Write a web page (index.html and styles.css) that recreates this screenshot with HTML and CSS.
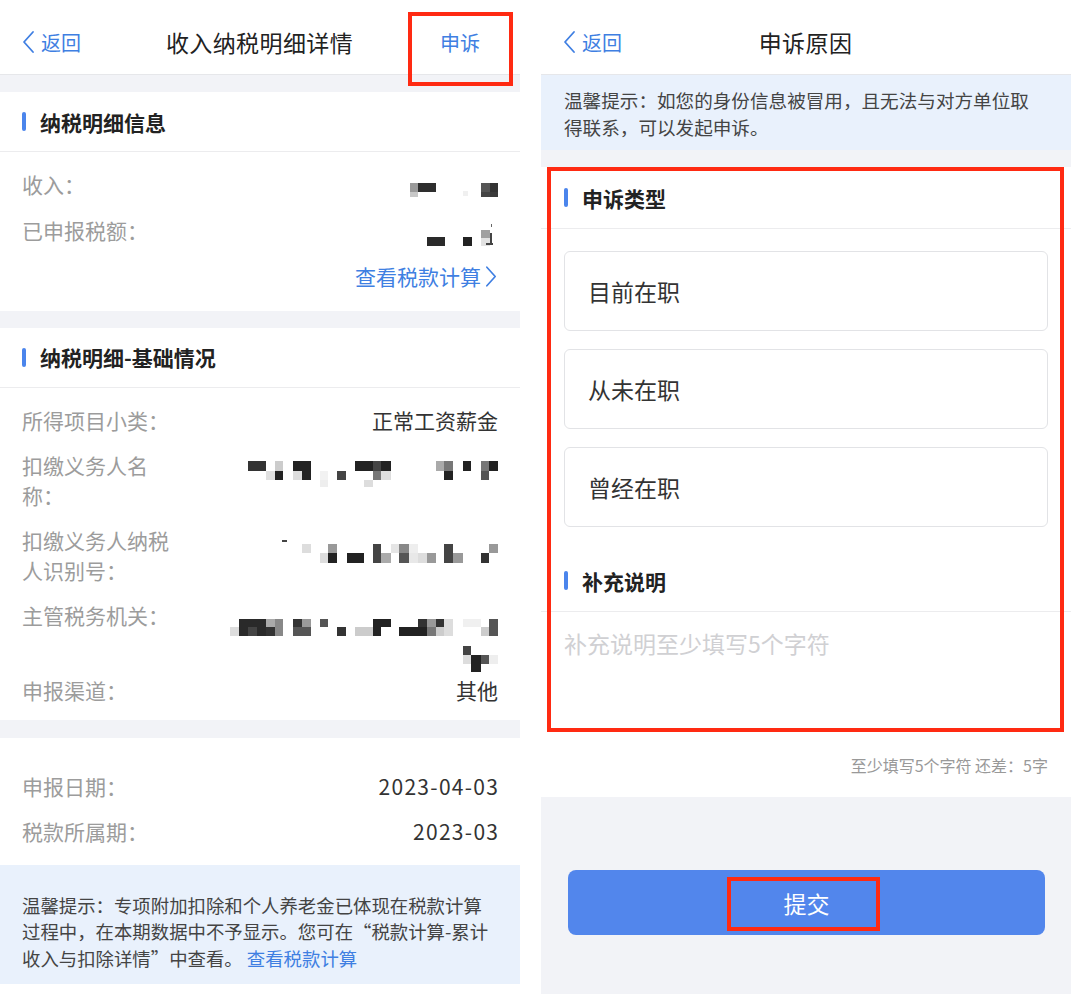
FILE: index.html
```html
<!DOCTYPE html>
<html lang="zh-CN">
<head>
<meta charset="utf-8">
<title>收入纳税明细详情 / 申诉原因</title>
<link rel="stylesheet" href="styles.css">
</head>
<body>
<div class="phone phone-left">
  <header class="nav">
    <a class="back"><svg class="chev" viewBox="0 0 14 24"><path d="M12 2 L3 12 L12 22"/></svg>返回</a>
    <h1 class="nav-title">收入纳税明细详情</h1>
    <a class="nav-action">申诉</a>
  </header>
  <span class="mark mark-nav"></span>

  <section class="card">
    <h2 class="sec-head">纳税明细信息</h2>
    <div class="rows rows-first">
      <div class="row"><span class="label">收入：</span><span class="value">
        <svg class="mosaic" width="90" height="30" viewBox="408 170 90 30">
          <rect x="410" y="183" width="8" height="9" fill="#9a9a9a"/><rect x="418" y="183" width="18" height="9" fill="#2e2e2e"/><rect x="410" y="192" width="8" height="5" fill="#c8c8c8"/><rect x="463" y="191" width="5" height="5" fill="#f0f0f0"/><rect x="481" y="183" width="9" height="9" fill="#555"/><rect x="490" y="183" width="8" height="9" fill="#333"/><rect x="481" y="192" width="9" height="5" fill="#444"/><rect x="490" y="192" width="8" height="5" fill="#3a3a3a"/>
        </svg></span></div>
      <div class="row"><span class="label">已申报税额：</span><span class="value">
        <svg class="mosaic" width="90" height="30" viewBox="408 216 90 30">
          <rect x="427" y="237" width="18" height="9" fill="#2a2a2a"/><rect x="463" y="237" width="9" height="9" fill="#222"/><rect x="481" y="230" width="9" height="8" fill="#a0a0a0"/><rect x="481" y="238" width="9" height="8" fill="#e2e2e2"/><rect x="490" y="233" width="2" height="10" fill="#444"/><rect x="486" y="243" width="7" height="2" fill="#444"/><rect x="491" y="224" width="1" height="3" fill="#666"/>
        </svg></span></div>
      <div class="row row-link"><a class="link">查看税款计算<svg class="chev-r" viewBox="0 0 14 24"><path d="M2 2 L11 12 L2 22"/></svg></a></div>
    </div>
  </section>

  <section class="card">
    <h2 class="sec-head">纳税明细-基础情况</h2>
    <div class="rows rows-second">
      <div class="row"><span class="label">所得项目小类：</span><span class="value">正常工资薪金</span></div>
      <div class="row"><span class="label">扣缴义务人名称：</span><span class="value">
        <svg class="mosaic" width="260" height="59" viewBox="240 451 260 59">
          <rect x="250" y="461" width="18" height="10" fill="#333"/><rect x="268" y="471" width="9" height="9" fill="#e0e0e0"/><rect x="277" y="461" width="8" height="10" fill="#ccc"/><rect x="277" y="471" width="8" height="9" fill="#222"/><rect x="295" y="461" width="18" height="10" fill="#222"/><rect x="295" y="471" width="9" height="9" fill="#ddd"/><rect x="304" y="471" width="9" height="9" fill="#222"/><rect x="322" y="471" width="8" height="9" fill="#f2f2f2"/><rect x="322" y="480" width="8" height="7" fill="#eee"/><rect x="339" y="471" width="9" height="9" fill="#444"/><rect x="357" y="461" width="18" height="10" fill="#222"/><rect x="375" y="461" width="8" height="10" fill="#444"/><rect x="375" y="471" width="8" height="9" fill="#777"/><rect x="383" y="461" width="10" height="10" fill="#222"/><rect x="383" y="471" width="10" height="9" fill="#ddd"/><rect x="366" y="480" width="9" height="7" fill="#ddd"/><rect x="438" y="461" width="8" height="10" fill="#aaa"/><rect x="446" y="461" width="9" height="10" fill="#777"/><rect x="446" y="471" width="9" height="9" fill="#222"/><rect x="465" y="461" width="8" height="10" fill="#222"/><rect x="483" y="461" width="8" height="10" fill="#777"/><rect x="483" y="471" width="8" height="9" fill="#555"/><rect x="491" y="461" width="9" height="10" fill="#222"/>
        </svg></span></div>
      <div class="row"><span class="label">扣缴义务人纳税人识别号：</span><span class="value">
        <svg class="mosaic" width="220" height="59" viewBox="280 526 220 59">
          <rect x="284" y="540" width="5" height="2" fill="#444"/><rect x="304" y="544" width="9" height="9" fill="#ddd"/><rect x="322" y="553" width="8" height="10" fill="#ddd"/><rect x="330" y="544" width="9" height="9" fill="#999"/><rect x="330" y="553" width="9" height="10" fill="#222"/><rect x="349" y="553" width="17" height="10" fill="#222"/><rect x="375" y="544" width="8" height="19" fill="#444"/><rect x="383" y="553" width="10" height="10" fill="#aaa"/><rect x="393" y="544" width="8" height="9" fill="#e5e5e5"/><rect x="401" y="544" width="10" height="9" fill="#888"/><rect x="401" y="553" width="10" height="10" fill="#555"/><rect x="411" y="544" width="9" height="9" fill="#eee"/><rect x="411" y="553" width="9" height="10" fill="#e8e8e8"/><rect x="420" y="553" width="9" height="10" fill="#ddd"/><rect x="429" y="553" width="9" height="10" fill="#999"/><rect x="446" y="544" width="9" height="19" fill="#444"/><rect x="455" y="553" width="10" height="10" fill="#999"/><rect x="483" y="553" width="8" height="10" fill="#333"/><rect x="491" y="544" width="9" height="9" fill="#999"/>
        </svg></span></div>
      <div class="row"><span class="label">主管税务机关：</span><span class="value">
        <svg class="mosaic" width="270" height="59" viewBox="230 601 270 59">
          <rect x="232" y="627" width="9" height="9" fill="#ddd"/><rect x="241" y="619" width="27" height="17" fill="#2a2a2a"/><rect x="250" y="627" width="9" height="9" fill="#444"/><rect x="268" y="619" width="9" height="8" fill="#aaa"/><rect x="268" y="627" width="9" height="9" fill="#333"/><rect x="277" y="619" width="8" height="17" fill="#888"/><rect x="295" y="619" width="9" height="8" fill="#333"/><rect x="295" y="627" width="9" height="9" fill="#555"/><rect x="304" y="619" width="9" height="8" fill="#999"/><rect x="304" y="627" width="9" height="9" fill="#555"/><rect x="322" y="619" width="8" height="8" fill="#555"/><rect x="339" y="627" width="9" height="9" fill="#333"/><rect x="357" y="627" width="18" height="9" fill="#ccc"/><rect x="375" y="619" width="8" height="17" fill="#222"/><rect x="383" y="619" width="10" height="8" fill="#222"/><rect x="401" y="627" width="28" height="9" fill="#222"/><rect x="420" y="619" width="9" height="8" fill="#333"/><rect x="429" y="619" width="9" height="8" fill="#999"/><rect x="429" y="627" width="9" height="9" fill="#777"/><rect x="438" y="619" width="8" height="8" fill="#333"/><rect x="438" y="627" width="8" height="9" fill="#ccc"/><rect x="446" y="619" width="9" height="17" fill="#ddd"/><rect x="465" y="619" width="18" height="8" fill="#f0f0f0"/><rect x="483" y="627" width="8" height="9" fill="#ccc"/><rect x="491" y="619" width="9" height="17" fill="#555"/><rect x="465" y="646" width="8" height="9" fill="#444"/><rect x="465" y="655" width="8" height="9" fill="#ddd"/><rect x="473" y="655" width="10" height="17" fill="#222"/><rect x="483" y="655" width="8" height="9" fill="#555"/><rect x="491" y="655" width="9" height="9" fill="#eee"/>
        </svg></span></div>
      <div class="row"><span class="label">申报渠道：</span><span class="value">其他</span></div>
    </div>
  </section>

  <section class="card">
    <div class="rows rows-third">
      <div class="row"><span class="label">申报日期：</span><span class="value"><span class="num">2023-04-03</span></span></div>
      <div class="row"><span class="label">税款所属期：</span><span class="value"><span class="num">2023-03</span></span></div>
    </div>
  </section>

  <p class="tip tip-left">温馨提示：专项附加扣除和个人养老金已体现在税款计算<br>过程中，在本期数据中不予显示。您可在“税款计算-累计<br>收入与扣除详情”中查看。 <a class="tip-link">查看税款计算</a></p>
</div>

<div class="phone phone-right">
  <header class="nav">
    <a class="back"><svg class="chev" viewBox="0 0 14 24"><path d="M12 2 L3 12 L12 22"/></svg>返回</a>
    <h1 class="nav-title">申诉原因</h1>
    <span class="nav-spacer"></span>
  </header>

  <p class="tip tip-right">温馨提示：如您的身份信息被冒用，且无法与对方单位取<br>得联系，可以发起申诉。</p>

  <section class="card card-form">
    <h2 class="sec-head sec-head-tall">申诉类型</h2>
    <div class="options">
      <div class="option">目前在职</div>
      <div class="option">从未在职</div>
      <div class="option">曾经在职</div>
    </div>
    <h2 class="sec-head sec-head-tall">补充说明</h2>
    <div class="textarea">补充说明至少填写5个字符</div>
    <div class="counter">至少填写5个字符 还差：5字</div>
    <span class="mark mark-form"></span>
  </section>

  <div class="actions">
    <button class="submit" type="button">提交<span class="mark mark-submit"></span></button>
  </div>
</div>
</body>
</html>
```

FILE: styles.css
```css
* { box-sizing: border-box; margin: 0; padding: 0; }

html, body { background: #ffffff; }

body {
  font-family: "Noto Sans CJK SC", "Noto Sans", sans-serif;
  color: #333;
  width: 1071px;
  height: 994px;
  overflow: hidden;
  display: flex;
  align-items: flex-start;
  gap: 21px;
}

.phone {
  position: relative;
  background: #f2f3f7;
  display: flex;
  flex-direction: column;
}
.phone-left { width: 520px; height: 984px; }
.phone-right { width: 530px; height: 994px; }

/* nav bar */
.nav {
  height: 75px;
  padding: 10px 22px 0 21px;
  background: #fff;
  border-bottom: 1px solid #e6e7ea;
  display: grid;
  grid-template-columns: 1fr auto 1fr;
  align-items: center;
}
.back {
  display: flex;
  align-items: center;
  gap: 6px;
  font-size: 20px;
  color: #3f7fe2;
}
.chev { width: 14px; height: 24px; }
.chev path, .chev-r path {
  fill: none;
  stroke: #3f7fe2;
  stroke-width: 1.8;
  stroke-linecap: round;
  stroke-linejoin: round;
}
.nav-title {
  font-size: 23px;
  font-weight: 400;
  letter-spacing: 0.4px;
  color: #222;
}
.nav-action {
  justify-self: end;
  margin-right: 18px;
  font-size: 20px;
  color: #3f7fe2;
}

/* cards */
.card {
  background: #fff;
  margin-top: 17px;
}
.phone-left .card:nth-of-type(3) { margin-top: 18px; }

.sec-head {
  height: 60px;
  padding-left: 22px;
  display: flex;
  align-items: center;
  gap: 14px;
  font-size: 21px;
  font-weight: 700;
  color: #222;
  border-bottom: 1px solid #ececee;
}
.sec-head::before {
  content: "";
  width: 4px;
  height: 19px;
  border-radius: 2px;
  background: #4b85ec;
}
.sec-head-tall { height: 62px; padding-left: 23px; }

.rows {
  display: flex;
  flex-direction: column;
  gap: 16px;
  padding: 18px 22px 19px;
}
.rows-second { padding-bottom: 14px; }
.rows-third { padding-top: 34px; padding-bottom: 18px; }

.row {
  display: flex;
  justify-content: space-between;
  align-items: flex-start;
  font-size: 21px;
  line-height: 29.5px;
}
.label {
  flex: 0 0 150px;
  color: #9c9c9c;
}
.value {
  flex: 1;
  display: flex;
  justify-content: flex-end;
  color: #333;
}
.num { letter-spacing: 1.3px; margin-right: -1.3px; }
.mosaic { display: block; overflow: visible; }

.row-link { justify-content: flex-end; }
.link {
  display: flex;
  align-items: center;
  gap: 4px;
  color: #3f7fe2;
}
.chev-r { width: 13px; height: 23px; }

/* tips */
.tip {
  background: #e9f1fc;
  color: #444;
  font-size: 18.4px;
}
.tip-left {
  padding: 27px 22px 13px;
  line-height: 26.5px;
  white-space: nowrap;
}
.tip-link { color: #3f7fe2; }
.tip-right {
  padding: 11px 23px 10px;
  font-size: 18.6px;
  line-height: 27px;
  white-space: nowrap;
}

/* form */
.card-form { position: relative; }
.options {
  display: flex;
  flex-direction: column;
  gap: 18px;
  padding: 22px 23px 23px;
}
.option {
  height: 80px;
  border: 1px solid #e2e3e6;
  border-radius: 6px;
  padding-left: 23px;
  display: flex;
  align-items: center;
  font-size: 23px;
  color: #333;
}
.textarea {
  height: 116px;
  padding: 15px 23px 0;
  font-size: 23px;
  line-height: 32px;
  color: #d0d0d3;
}
.counter {
  padding: 26px 23px 21px;
  text-align: right;
  font-size: 16px;
  line-height: 22px;
  color: #999;
}

.actions {
  padding: 73px 26px 0 27px;
}
.submit {
  position: relative;
  width: 100%;
  height: 65px;
  border: none;
  border-radius: 8px;
  background: #5286ec;
  color: #fff;
  font-family: inherit;
  font-size: 23px;
}

/* red annotation boxes */
.mark {
  position: absolute;
  border: 4px solid #ff2a12;
  pointer-events: none;
}
.mark-nav { left: 408px; top: 12px; width: 105px; height: 74px; }
.mark-form { left: 6px; top: 0; width: 517px; height: 565px; }
.mark-submit { left: 159px; top: 7px; width: 153px; height: 54px; }
```
